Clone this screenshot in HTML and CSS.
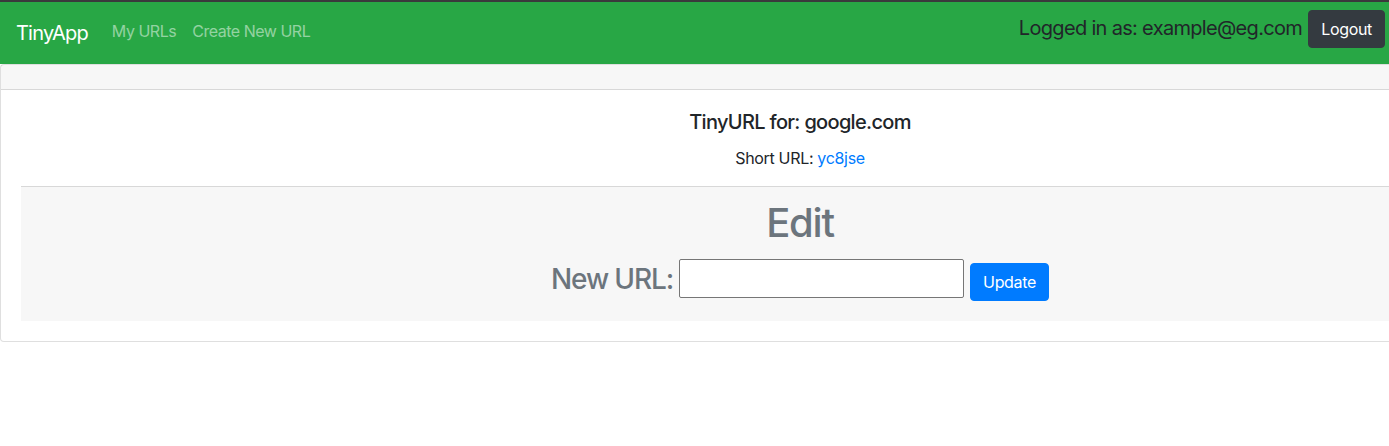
FILE: index.html
```html
<!DOCTYPE html>
<html lang="en">
<head>
<meta charset="utf-8">
<title>TinyApp</title>
<link rel="stylesheet" href="styles.css">
</head>
<body>
<div class="page">
  <nav class="navbar">
    <div class="nav-left">
      <a class="brand" href="#">TinyApp</a>
      <a class="nav-link" href="#">My URLs</a>
      <a class="nav-link" href="#">Create New URL</a>
    </div>
    <div class="nav-right">
      <span class="user">Logged in as: example@eg.com</span>
      <button class="btn btn-dark" type="button">Logout</button>
    </div>
  </nav>
  <div class="card">
    <div class="card-header"></div>
    <div class="card-body">
      <h5 class="card-title">TinyURL for: google.com</h5>
      <p class="card-text">Short URL: <a href="#" class="link">yc8jse</a></p>
      <div class="card-footer">
        <h1 class="edit-title">Edit</h1>
        <form class="edit-form">
          <label class="form-label" for="longURL">New URL:</label>
          <input class="url-input" id="longURL" type="text" name="longURL">
          <button class="btn btn-primary" type="submit">Update</button>
        </form>
      </div>
    </div>
  </div>
</div>
</body>
</html>
```

FILE: styles.css
```css
html, body {
  margin: 0;
  padding: 0;
  background: #fff;
}

body {
  font-family: Inter, "Noto Sans", "Liberation Sans", sans-serif;
  font-size: 16px;
  line-height: 1.5;
  color: #212529;
  letter-spacing: -0.015em;
}

.page {
  overflow: hidden;
  border-top: 2px solid #3a3a3c;
}

.navbar {
  height: 62px;
  box-sizing: border-box;
  padding: 8px 4px 8px 16px;
  background: #28a745;
  display: flex;
  justify-content: space-between;
  align-items: flex-start;
}

.nav-left {
  display: flex;
  align-items: center;
  height: 46px;
}

.brand {
  font-size: 20px;
  line-height: 30px;
  padding: 5px 0;
  margin-right: 16px;
  color: #fff;
  text-decoration: none;
  letter-spacing: -0.04em;
}

.nav-link {
  padding: 8px;
  margin-bottom: 5px;
  color: rgba(255, 255, 255, 0.5);
  text-decoration: none;
  line-height: 24px;
  letter-spacing: -0.03em;
}

.nav-right {
  display: flex;
  align-items: baseline;
  gap: 6px;
}

.user {
  font-size: 20px;
  line-height: 24px;
  color: #212529;
  letter-spacing: -0.034em;
}

.btn {
  font-family: inherit;
  font-size: 16px;
  line-height: 24px;
  letter-spacing: -0.02em;
  padding: 6px 12px;
  border: 1px solid transparent;
  border-radius: 4px;
  cursor: pointer;
}

.btn-dark {
  background: #343a40;
  border-color: #343a40;
  color: #fff;
}

.btn-primary {
  background: #007bff;
  border-color: #007bff;
  color: #fff;
}

.card {
  width: 1600px;
  box-sizing: border-box;
  border: 1px solid rgba(0, 0, 0, 0.125);
  border-radius: 4px 0 0 4px;
  background: #fff;
}

.card-header {
  padding: 12px 20px;
  background: rgba(0, 0, 0, 0.03);
  border-bottom: 1px solid rgba(0, 0, 0, 0.125);
}

.card-body {
  padding: 20px;
  text-align: center;
}

.card-title {
  margin: 0 0 12px;
  font-size: 20px;
  font-weight: 500;
  line-height: 24px;
  letter-spacing: -0.034em;
}

.card-text {
  margin: 0 0 16px;
  font-size: 16px;
  letter-spacing: -0.02em;
}

.link {
  color: #007bff;
  text-decoration: none;
}

.card-footer {
  background: rgba(0, 0, 0, 0.03);
  border-top: 1px solid rgba(0, 0, 0, 0.125);
  padding: 12px 20px;
}

.edit-title {
  margin: 0 0 8px;
  font-size: 40px;
  font-weight: 500;
  line-height: 48px;
  color: #6c757d;
  letter-spacing: -0.03em;
}

.edit-form {
  display: flex;
  justify-content: center;
  align-items: flex-start;
  gap: 6px;
  height: 54px;
}

.form-label {
  font-size: 28px;
  font-weight: 500;
  line-height: 34px;
  margin-top: 7px;
  color: #6c757d;
  letter-spacing: -0.04em;
}

.url-input {
  width: 285px;
  height: 39px;
  box-sizing: border-box;
  margin: 4px 0 0;
  border: 1px solid #767676;
  border-radius: 2px;
  background: #fff;
  font-family: inherit;
  font-size: 16px;
  padding: 0 4px;
}

.edit-form .btn {
  margin-top: 8px;
}
```
